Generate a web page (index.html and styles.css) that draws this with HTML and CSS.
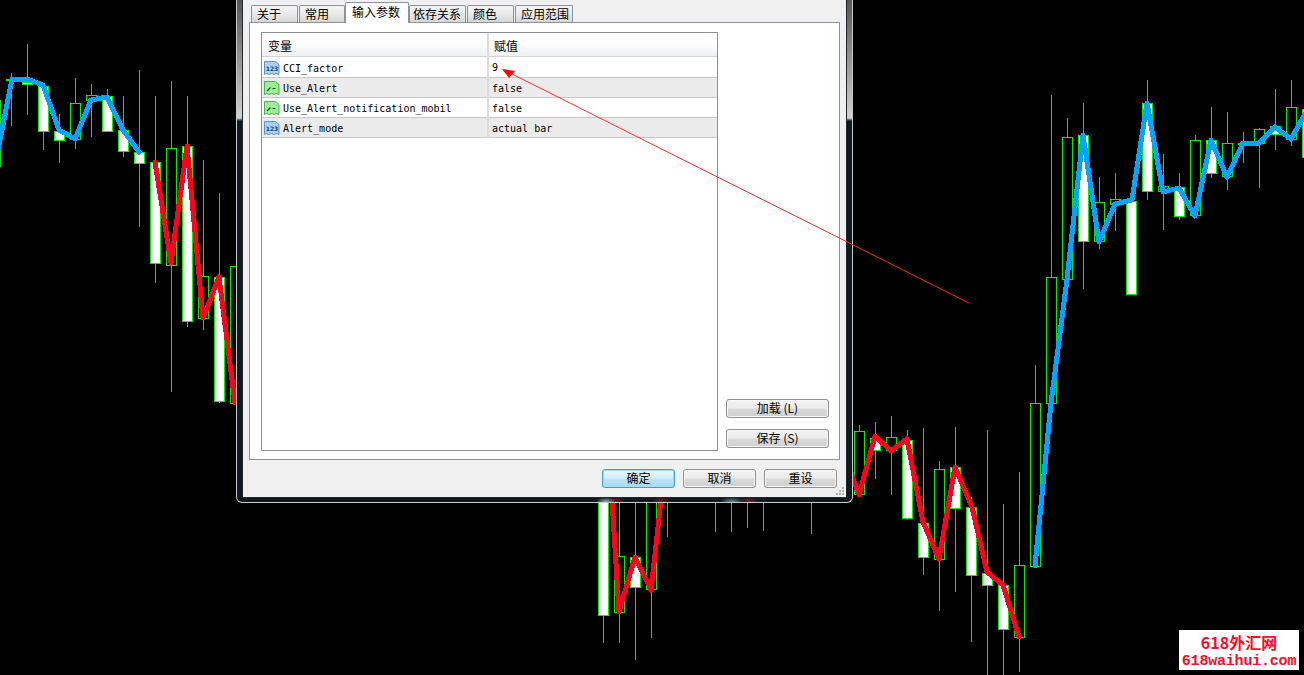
FILE: index.html
```html
<!DOCTYPE html>
<html lang="zh-CN">
<head>
  <meta charset="UTF-8" />
  <title>输入参数</title>
  <link rel="stylesheet" href="styles.css">
</head>
<body>

  <!-- chart behind the dialog -->
  <svg class="chart" width="1304" height="675" viewBox="0 0 1304 675">
    <path class="wick" d="M0.5 100V167M11.5 73V126M27.5 44V115M43.5 131V150M59.5 114V163M75.5 78V149M91.5 84V137M107.5 89V96M123.5 96V157M139.5 70V227M155.5 96V283M171.5 81V392M187.5 96V327M203.5 160V330M219.5 193V403
      M603.5 503V643M619.5 503V643M635.5 503V660M651.5 503V638M667.5 503V537M715.5 503V532M731.5 503V532M747.5 503V528M763.5 503V531M811.5 503V534
      M859.5 425V431M875.5 422V479M891.5 416V495M907.5 430V520M923.5 428V575M939.5 461V611M955.5 427V592M971.5 497V642M987.5 430V675M1003.5 504V675M1019.5 472V672M1035.5 365V403
      M1051.5 95V277M1067.5 118V137M1083.5 103V289M1099.5 177V249M1115.5 173V231M1147.5 80V200M1163.5 154V230M1179.5 173V220M1195.5 135V140M1211.5 107V178M1227.5 112V190M1243.5 132V163M1259.5 128V188M1275.5 89V150M1291.5 80V146" />
    <path class="hollow" d="M6.5 79.5h10v1h-10zM70.5 103.5h10v36h-10zM86.5 95.5h10v5h-10zM166.5 148.5h10v117h-10zM198.5 276.5h10v42h-10zM230.5 266.5h10v137h-10z
      M614.5 556.5h10v56h-10zM646.5 495.5h10v94h-10zM854.5 431.5h10v63h-10zM886.5 437.5h10v13h-10zM934.5 469.5h10v90h-10zM1014.5 565.5h10v72h-10zM1030.5 403.5h10v163h-10z
      M1046.5 277.5h10v126h-10zM1062.5 137.5h10v142h-10zM1094.5 202.5h10v39h-10zM1110.5 199.5h10v5h-10zM1158.5 186.5h10v5h-10zM1190.5 140.5h10v75h-10zM1222.5 143.5h10v33h-10zM1238.5 143.5h10v1h-10zM1254.5 129.5h10v14h-10zM1286.5 107.5h10v32h-10z" />
    <path class="solid" d="M22.5 82.5h10v2h-10zM38.5 86.5h10v45h-10zM54.5 131.5h10v9h-10zM102.5 96.5h10v35h-10zM118.5 130.5h10v21h-10zM134.5 152.5h10v11h-10zM150.5 162.5h10v101h-10zM182.5 146.5h10v175h-10zM214.5 277.5h10v124h-10z
      M598.5 495.5h10v120h-10zM630.5 557.5h10v30h-10z
      M870.5 438.5h10v12h-10zM902.5 440.5h10v78h-10zM918.5 523.5h10v34h-10zM950.5 467.5h10v41h-10zM966.5 507.5h10v68h-10zM982.5 573.5h10v12h-10zM998.5 585.5h10v44h-10z
      M1078.5 135.5h10v106h-10zM1126.5 201.5h10v93h-10zM1142.5 103.5h10v88h-10zM1174.5 187.5h10v29h-10zM1206.5 140.5h10v33h-10zM1270.5 126.5h10v8h-10zM1302.5 109.5h10v48h-10z" />
    <polyline class="line-blue" points="-6,170 12,79 27,79 43,85 59,130 75,139 91,100 107,97 123,130 139,152" />
    <polyline class="line-red" points="155,162 171,263 187,146 203,318 219,277 235,403" />
    <polyline class="line-red" points="612,500 619,612 635,557 651,590 661,500" />
    <polyline class="line-red" points="850,470 859,495 875,436 891,451 907,439 923,522 939,559 955,467 972,507 987,572 1003,585 1019,637" />
    <polyline class="line-blue" points="1035,566 1051,403 1067,279 1083,135 1099,242 1115,204 1132,200 1147,103 1163,192 1179,188 1195,216 1211,140 1227,177 1243,143 1259,143 1275,127 1291,139 1310,105" />
  </svg>

  <div class="dialog">
    <div class="client">
      <div class="tabs">
        <div class="tab">关于</div>
        <div class="tab tab-common">常用</div>
        <div class="tab tab-active">输入参数</div>
        <div class="tab tab-depend">依存关系</div>
        <div class="tab">颜色</div>
        <div class="tab tab-scope">应用范围</div>
      </div>

      <div class="panel">
        <div class="grid-wrap">
          <table class="params">
            <thead>
              <tr><th class="col-name">变量</th><th>赋值</th></tr>
            </thead>
            <tbody>
              <tr>
                <td class="col-name">
                  <div class="name">
                    <svg class="row-icon" viewBox="0 0 16 16">
                      <path class="doc-num" d="M0.5 1.5h11l3.5 3v10l-2.500-1-2.500 1-2.500-1-2.500 1-2.500-1-2 1z" />
                      <text x="8" y="10.500" class="icon-num">123</text>
                    </svg>
                    <span>CCI_factor</span>
                  </div>
                </td>
                <td>9</td>
              </tr>
              <tr class="alt">
                <td class="col-name">
                  <div class="name">
                    <svg class="row-icon" viewBox="0 0 16 16">
                      <path class="doc-bool" d="M0.5 1.5h11l3.5 3v10l-2.500-1-2.500 1-2.500-1-2.500 1-2.500-1-2 1z" />
                      <path class="bool-mark" d="M3 11l3.500-3.500M8.500 8.500h3" />
                    </svg>
                    <span>Use_Alert</span>
                  </div>
                </td>
                <td>false</td>
              </tr>
              <tr>
                <td class="col-name">
                  <div class="name">
                    <svg class="row-icon" viewBox="0 0 16 16">
                      <path class="doc-bool" d="M0.5 1.5h11l3.5 3v10l-2.500-1-2.500 1-2.500-1-2.500 1-2.500-1-2 1z" />
                      <path class="bool-mark" d="M3 11l3.500-3.500M8.500 8.500h3" />
                    </svg>
                    <span>Use_Alert_notification_mobil</span>
                  </div>
                </td>
                <td>false</td>
              </tr>
              <tr class="alt">
                <td class="col-name">
                  <div class="name">
                    <svg class="row-icon" viewBox="0 0 16 16">
                      <path class="doc-num" d="M0.5 1.5h11l3.5 3v10l-2.500-1-2.500 1-2.500-1-2.500 1-2.500-1-2 1z" />
                      <text x="8" y="10.500" class="icon-num">123</text>
                    </svg>
                    <span>Alert_mode</span>
                  </div>
                </td>
                <td>actual bar</td>
              </tr>
            </tbody>
          </table>
        </div>
        <div class="side-buttons">
          <button class="btn btn-side">加载 (L)</button>
          <button class="btn btn-side">保存 (S)</button>
        </div>
      </div>

      <div class="footer">
        <button class="btn btn-default">确定</button>
        <button class="btn">取消</button>
        <button class="btn">重设</button>
      </div>

      <svg class="grip" width="8" height="8" viewBox="0 0 8 8">
        <path d="M6 0h2v2H6zM3 3h2v2H3zM6 3h2v2H6zM0 6h2v2H0zM3 6h2v2H3zM6 6h2v2H6z" fill="#b4b4b4" />
      </svg>
    </div>
  </div>

  <!-- annotation drawn over everything -->
  <svg class="arrow" width="1304" height="675" viewBox="0 0 1304 675">
    <line x1="969" y1="303" x2="508" y2="72" stroke="#ff2a2a" />
    <polygon points="502,69 515,71 509,78" fill="#ff0000" />
  </svg>

  <div class="watermark">
    <div class="wm-cn">618外汇网</div>
    <div class="wm-url">618waihui.com</div>
  </div>

</body>
</html>
```

FILE: styles.css
```css
* {
  box-sizing: border-box;
  margin: 0;
  padding: 0;
}

body {
  position: relative;
  width: 1304px;
  height: 675px;
  background: #000;
  overflow: hidden;
  font-family: "Noto Sans CJK SC", "Liberation Sans", sans-serif;
  font-size: 12px;
  color: #000;
}

.chart {
  position: absolute;
  top: 0;
  left: 0;
}

.wick {
  fill: none;
  stroke: #1fd81f;
  shape-rendering: crispEdges;
}

.hollow {
  fill: #000;
  stroke: #00f000;
  shape-rendering: crispEdges;
}

.solid {
  fill: #fff;
  stroke: #00f000;
  shape-rendering: crispEdges;
}

.line-blue,
.line-red {
  fill: none;
  stroke-width: 5;
  stroke-linejoin: round;
  stroke-linecap: round;
  shape-rendering: crispEdges;
}

.line-blue {
  stroke: #00a5ff;
}

.line-red {
  stroke: #ff0020;
}

/* window */
.dialog {
  position: absolute;
  top: 0;
  left: 236px;
  width: 617px;
  height: 503px;
  padding: 0 5px 4px;
  border: 1px solid #c6cccc;
  border-top: none;
  border-radius: 0 0 6px 6px;
  background:
    radial-gradient(ellipse 10px 5px at 369px 100%, rgba(190, 215, 225, 0.8), transparent),
    radial-gradient(ellipse 8px 5px at 380px 100%, rgba(150, 30, 40, 0.8), transparent),
    radial-gradient(ellipse 10px 5px at 424px 100%, rgba(150, 40, 50, 0.7), transparent),
    radial-gradient(ellipse 12px 5px at 495px 100%, rgba(120, 170, 170, 0.8), transparent),
    radial-gradient(ellipse 10px 5px at 512px 100%, rgba(150, 40, 50, 0.8), transparent),
    linear-gradient(to bottom, #555 0, #d2d2d2 118px, #101a1e 121px, #101a1e 100%);
}

.client {
  position: relative;
  display: flex;
  flex-direction: column;
  height: 498px;
  border: 1px solid #20262a;
  border-top: none;
  background: #f0f0f0;
}

.tabs {
  display: flex;
  align-items: flex-end;
  gap: 1px;
  height: 21px;
  margin: 2px 0 0 8px;
}

.tab {
  width: 47px;
  height: 17px;
  margin-bottom: 1px;
  padding-left: 5px;
  border: 1px solid #8e9299;
  border-bottom: none;
  border-radius: 2px 2px 0 0;
  background: linear-gradient(to bottom, #f4f4f4, #e9e9e9 50%, #d6d6d6);
  line-height: 15px;
  white-space: nowrap;
}

.tab-common {
  width: 46px;
}

.tab-active {
  position: relative;
  z-index: 1;
  width: 64px;
  height: 21px;
  margin-bottom: 0;
  margin-left: -1px;
  padding-left: 6px;
  background: #fff;
  line-height: 18px;
}

.tab-depend {
  width: 57px;
  margin-left: -1px;
  padding-left: 3px;
}

.tab-scope {
  width: 58px;
}

.panel {
  display: flex;
  gap: 8px;
  width: 591px;
  height: 438px;
  margin: -1px 0 0 6px;
  padding: 9px 10px 8px 11px;
  border: 1px solid #8e9299;
  background: #fff;
}

.grid-wrap {
  width: 457px;
  height: 419px;
  border: 1px solid #8b9097;
}

.params {
  width: 100%;
  border-collapse: collapse;
  table-layout: fixed;
  font-family: "DejaVu Sans Mono", "Noto Sans CJK SC", monospace;
  font-size: 10px;
}

.params th {
  height: 23px;
  padding: 3px 0 0 5px;
  border-bottom: 1px solid #d4d4d4;
  background: linear-gradient(to bottom, #fff 40%, #eef0f2);
  font-family: "Noto Sans CJK SC", sans-serif;
  font-size: 12px;
  font-weight: normal;
  text-align: left;
}

.params th.col-name {
  padding-left: 6px;
}

.params td {
  height: 20px;
  padding: 3px 0 0 3px;
  border-bottom: 1px solid #c8c8c8;
  line-height: 16px;
  white-space: nowrap;
}

.params tbody tr:first-child td {
  height: 21px;
}

.params .col-name {
  width: 226px;
  border-right: 2px solid #dcdcdc;
}

.params td.col-name {
  padding: 2px 0 0 2px;
}

.alt td {
  background: #ebebeb;
}

.name {
  display: flex;
  align-items: center;
  gap: 3px;
  height: 16px;
}

.name span {
  margin-top: 2px;
}

.row-icon {
  flex: none;
  width: 16px;
  height: 16px;
}

.doc-num {
  fill: #a8d0f4;
  stroke: #5b93cf;
}

.doc-bool {
  fill: #9cec98;
  stroke: #4fb04f;
}

.bool-mark {
  fill: none;
  stroke: #14521a;
  stroke-width: 1.2;
}

.icon-num {
  font-family: "DejaVu Sans", sans-serif;
  font-size: 6px;
  font-weight: bold;
  fill: #123f78;
  text-anchor: middle;
}

.btn {
  width: 73px;
  height: 19px;
  padding-bottom: 2px;
  border: 1px solid #8f8f8f;
  border-radius: 3px;
  background: linear-gradient(to bottom, #f3f3f3, #ebebeb 48%, #dadada 52%, #cfcfcf);
  box-shadow: inset 0 0 0 1px #f8f8f8;
  font-family: "Noto Sans CJK SC", sans-serif;
  font-size: 12px;
  line-height: 15px;
  color: #000;
}

.btn-side {
  width: 103px;
}

.btn-default {
  border-color: #3c9fd8;
  background: linear-gradient(to bottom, #e8f5fc, #d6eefb 48%, #bfe5f9 52%, #a9d9f2);
  box-shadow: inset 0 0 0 1px #9fe0f8;
}

.side-buttons {
  display: flex;
  flex-direction: column;
  justify-content: flex-end;
  gap: 11px;
  padding-bottom: 3px;
}

.footer {
  display: flex;
  justify-content: flex-end;
  gap: 8px;
  margin-top: 9px;
  padding-right: 9px;
}

.grip {
  position: absolute;
  right: 2px;
  bottom: 2px;
}

.arrow {
  position: absolute;
  top: 0;
  left: 0;
}

.watermark {
  position: absolute;
  top: 630px;
  left: 1179px;
  width: 120px;
  height: 40px;
  padding-top: 3px;
  background: #fff;
  color: #ff0a28;
  text-align: center;
}

.wm-cn {
  height: 20px;
  font-size: 16px;
  font-weight: bold;
  line-height: 18px;
}

.wm-url {
  height: 17px;
  font-family: "Liberation Mono", monospace;
  font-size: 15px;
  font-weight: bold;
  line-height: 17px;
  letter-spacing: -0.2px;
}
```
